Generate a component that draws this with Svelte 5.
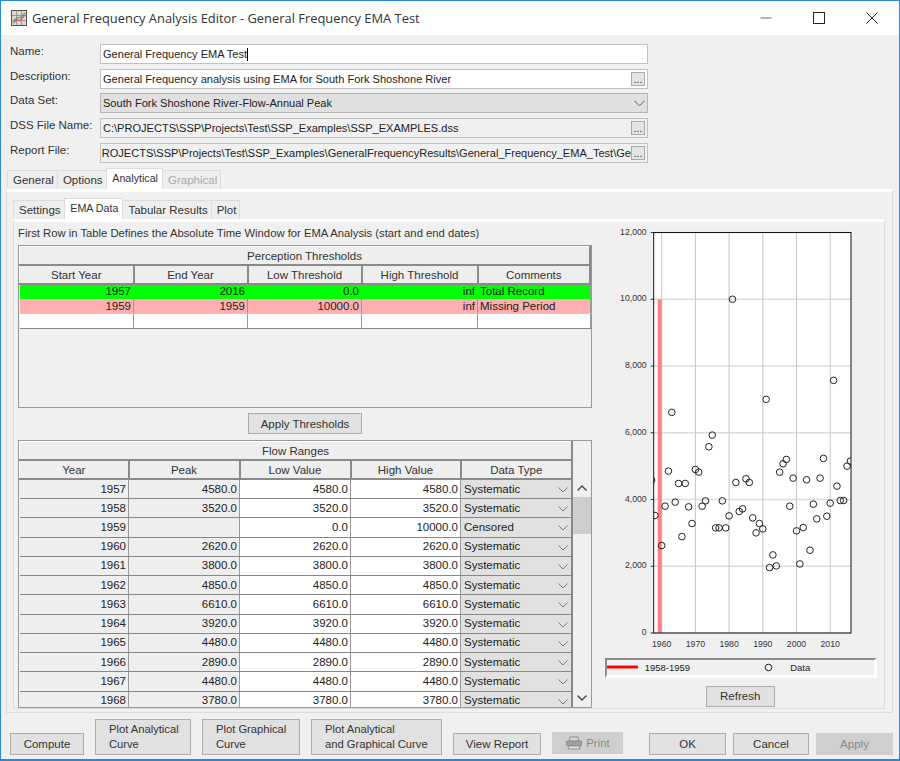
<script>
  const fields = [
    { label: 'Name:', value: 'General Frequency EMA Test', kind: 'text', caret: true },
    { label: 'Description:', value: 'General Frequency analysis using EMA for South Fork Shoshone River', kind: 'text', more: true },
    { label: 'Data Set:', value: 'South Fork Shoshone River-Flow-Annual Peak', kind: 'combo' },
    { label: 'DSS File Name:', value: 'C:\\PROJECTS\\SSP\\Projects\\Test\\SSP_Examples\\SSP_EXAMPLES.dss', kind: 'readonly', more: true },
    { label: 'Report File:', value: 'ROJECTS\\SSP\\Projects\\Test\\SSP_Examples\\GeneralFrequencyResults\\General_Frequency_EMA_Test\\Ge', kind: 'readonly', more: true, tail: true }
  ];

  const thresholds = [
    { start: '1957', end: '2016', low: '0.0', high: 'inf', comment: 'Total Record', cls: 'green' },
    { start: '1959', end: '1959', low: '10000.0', high: 'inf', comment: 'Missing Period', cls: 'pink' },
    { start: '', end: '', low: '', high: '', comment: '', cls: '' }
  ];

  const flows = [
    ['1957', '4580.0', '4580.0', '4580.0', 'Systematic'],
    ['1958', '3520.0', '3520.0', '3520.0', 'Systematic'],
    ['1959', '', '0.0', '10000.0', 'Censored'],
    ['1960', '2620.0', '2620.0', '2620.0', 'Systematic'],
    ['1961', '3800.0', '3800.0', '3800.0', 'Systematic'],
    ['1962', '4850.0', '4850.0', '4850.0', 'Systematic'],
    ['1963', '6610.0', '6610.0', '6610.0', 'Systematic'],
    ['1964', '3920.0', '3920.0', '3920.0', 'Systematic'],
    ['1965', '4480.0', '4480.0', '4480.0', 'Systematic'],
    ['1966', '2890.0', '2890.0', '2890.0', 'Systematic'],
    ['1967', '4480.0', '4480.0', '4480.0', 'Systematic'],
    ['1968', '3780.0', '3780.0', '3780.0', 'Systematic']
  ];

  // annual peaks, 1957 to 2016 (1959 has no value)
  const peaks = [
    4580, 3520, null, 2620, 3800, 4850, 6610, 3920, 4480, 2890,
    4480, 3780, 3280, 4900, 4820, 3800, 3960, 5580, 5930, 3150,
    3150, 3960, 3150, 3510, 10000, 4510, 3640, 3720, 4620, 4510,
    3450, 3000, 3280, 3120, 7000, 1960, 2340, 2010, 4820, 5070,
    5200, 3800, 4640, 3060, 2070, 3160, 4590, 2480, 3860, 3420,
    4640, 5230, 3500, 3890, 7570, 4400, 3970, 3970, 5000, 5150
  ];

  const plot = { left: 42.7, right: 240, top: 7.5, bottom: 408 };
  const xOf = (year) => 50.7 + (year - 1960) * 3.37;
  const yOf = (v) => plot.bottom - (v / 12000) * (plot.bottom - plot.top);

  const yTicks = [0, 2000, 4000, 6000, 8000, 10000, 12000];
  const xTicks = [1960, 1970, 1980, 1990, 2000, 2010];
  const points = peaks
    .map((v, i) => ({ year: 1957 + i, v }))
    .filter((p) => p.v !== null);
  const fmt = (v) => v.toLocaleString('en-US');
</script>

<div class="window">
  <div class="titlebar">
    <svg class="app-icon" width="16" height="16" viewBox="0 0 16 16">
      <rect x="0.5" y="0.5" width="15" height="15" fill="#d8d8d8" stroke="#555"/>
      <path d="M1 5.5H15M1 10.5H15M5.5 1V15M10.5 1V15" stroke="#999" stroke-width="1"/>
      <path d="M2 13L6 10L9 10.5L14 5" stroke="#e0584a" stroke-width="1.2" fill="none"/>
      <path d="M2 11L6 8L10 7L14 3" stroke="#4fae4f" stroke-width="1.2" fill="none"/>
    </svg>
    <span class="title-text">General Frequency Analysis Editor - General Frequency EMA Test</span>
    <div class="win-controls">
      <svg width="12" height="12" viewBox="0 0 12 12"><path d="M0.5 6H11.5" stroke="#666" stroke-width="1"/></svg>
      <svg width="12" height="12" viewBox="0 0 12 12"><rect x="0.5" y="0.5" width="11" height="11" fill="none" stroke="#222"/></svg>
      <svg width="12" height="12" viewBox="0 0 12 12"><path d="M0.5 0.5L11.5 11.5M11.5 0.5L0.5 11.5" stroke="#222"/></svg>
    </div>
  </div>

  <div class="body">
    <div class="form">
      {#each fields as f}
        <div class="row">
          <span class="label">{f.label}</span>
          <div class="field {f.kind}" class:tail={f.tail}>
            <span class="value">{f.value}</span>
            {#if f.caret}<i class="caret"></i>{/if}
            {#if f.more}<span class="more">...</span>{/if}
            {#if f.kind === 'combo'}
              <svg class="chev" width="11" height="7" viewBox="0 0 11 7"><path d="M0.5 0.8L5.5 5.8L10.5 0.8" fill="none" stroke="#555"/></svg>
            {/if}
          </div>
        </div>
      {/each}
    </div>

    <div class="tabs outer-tabs">
      <span class="tab">General</span>
      <span class="tab">Options</span>
      <span class="tab active">Analytical</span>
      <span class="tab disabled">Graphical</span>
    </div>

    <div class="outer-panel">
      <div class="tabs inner-tabs">
        <span class="tab">Settings</span>
        <span class="tab active">EMA Data</span>
        <span class="tab">Tabular Results</span>
        <span class="tab">Plot</span>
      </div>

      <div class="inner-panel">
        <div class="left">
          <p class="hint">First Row in Table Defines the Absolute Time Window for EMA Analysis (start and end dates)</p>

          <div class="table-box thresholds">
            <table>
              <colgroup>
                <col style="width:114px"/><col style="width:114px"/><col style="width:114px"/><col style="width:116px"/><col/>
              </colgroup>
              <thead>
                <tr><th class="group" colspan="5">Perception Thresholds</th></tr>
                <tr class="heads"><th>Start Year</th><th>End Year</th><th>Low Threshold</th><th>High Threshold</th><th>Comments</th></tr>
              </thead>
              <tbody>
                {#each thresholds as t}
                  <tr class={t.cls}>
                    <td>{t.start}</td><td>{t.end}</td><td>{t.low}</td><td>{t.high}</td><td class="txt">{t.comment}</td>
                  </tr>
                {/each}
              </tbody>
            </table>
          </div>

          <div class="apply-row"><button class="btn apply-thresholds">Apply Thresholds</button></div>

          <div class="table-box flows">
            <div class="flow-scroll">
              <table>
                <colgroup>
                  <col style="width:109px"/><col style="width:111px"/><col style="width:111px"/><col style="width:110px"/><col/>
                </colgroup>
                <thead>
                  <tr><th class="group" colspan="5">Flow Ranges</th></tr>
                  <tr class="heads"><th>Year</th><th>Peak</th><th>Low Value</th><th>High Value</th><th>Data Type</th></tr>
                </thead>
                <tbody>
                  {#each flows as r}
                    <tr>
                      <td class="locked">{r[0]}</td>
                      <td class="locked" class:blank={r[1] === ''}>{r[1]}</td>
                      <td>{r[2]}</td>
                      <td>{r[3]}</td>
                      <td class="dtype">
                        <span>{r[4]}</span>
                        <svg width="10" height="6" viewBox="0 0 10 6"><path d="M0.5 0.5L5 5L9.5 0.5" fill="none" stroke="#777"/></svg>
                      </td>
                    </tr>
                  {/each}
                </tbody>
              </table>
            </div>
            <div class="scrollbar">
              <div class="sb-head"></div>
              <div class="sb-arrow">
                <svg width="10" height="6" viewBox="0 0 10 6"><path d="M0.5 5.5L5 1L9.5 5.5" fill="none" stroke="#444" stroke-width="1.4"/></svg>
              </div>
              <div class="sb-track"><div class="sb-thumb"></div></div>
              <div class="sb-arrow">
                <svg width="10" height="6" viewBox="0 0 10 6"><path d="M0.5 0.5L5 5L9.5 0.5" fill="none" stroke="#444" stroke-width="1.4"/></svg>
              </div>
            </div>
          </div>
        </div>

        <div class="right">
          <svg class="chart" width="270" height="430" viewBox="0 0 270 430">
            <rect x={plot.left} y={plot.top} width={plot.right - plot.left} height={plot.bottom - plot.top} fill="#fff"/>
            {#each yTicks as v}
              <line x1={plot.left} x2={plot.right} y1={yOf(v)} y2={yOf(v)} stroke="#dcdcdc" stroke-width="1.3"/>
              <line x1={plot.left - 3} x2={plot.left} y1={yOf(v)} y2={yOf(v)} stroke="#333"/>
              <text x={plot.left - 7} y={yOf(v) + 2} text-anchor="end" class="tick">{fmt(v)}</text>
            {/each}
            {#each xTicks as year}
              <line x1={xOf(year)} x2={xOf(year)} y1={plot.top} y2={plot.bottom} stroke="#c4c4c4" stroke-width="1"/>
              <text x={xOf(year)} y={plot.bottom + 14} text-anchor="middle" class="tick">{year}</text>
            {/each}
            <rect x="46.7" y={yOf(10000)} width="4" height={plot.bottom - yOf(10000)} fill="#ff8080"/>
            <svg x={plot.left} y={plot.top} width={plot.right - plot.left} height={plot.bottom - plot.top} viewBox="{plot.left} {plot.top} {plot.right - plot.left} {plot.bottom - plot.top}">
              {#each points as p}
                <circle cx={xOf(p.year)} cy={yOf(p.v)} r="3.3" fill="none" stroke="#222" stroke-width="1"/>
              {/each}
            </svg>
            <rect x={plot.left} y={plot.top} width={plot.right - plot.left} height={plot.bottom - plot.top} fill="none" stroke="#111" stroke-width="1"/>
          </svg>

          <div class="legend">
            <i class="legend-line"></i>
            <span class="legend-a">1958-1959</span>
            <svg class="legend-dot" width="9" height="9" viewBox="0 0 9 9"><circle cx="4.5" cy="4.5" r="3.3" fill="none" stroke="#222"/></svg>
            <span class="legend-b">Data</span>
          </div>

          <div class="refresh-row"><button class="btn refresh">Refresh</button></div>
        </div>
      </div>
    </div>

    <div class="footer">
      <button class="btn compute">Compute</button>
      <button class="btn two plot-a">Plot Analytical<br/>Curve</button>
      <button class="btn two plot-g">Plot Graphical<br/>Curve</button>
      <button class="btn two plot-ag">Plot Analytical<br/>and Graphical Curve</button>
      <button class="btn report">View Report</button>
      <button class="btn print" disabled>
        <svg width="18" height="14" viewBox="0 0 18 14">
          <path d="M5 1H13L14 5H4Z" fill="#d6d6d6" stroke="#8f8f8f"/>
          <rect x="1.5" y="5" width="15" height="5" rx="1" fill="#a0a0a0" stroke="#8f8f8f"/>
          <path d="M4 10H14L15 13H3Z" fill="#e4e4e4" stroke="#8f8f8f"/>
        </svg>
        Print
      </button>
      <button class="btn ok">OK</button>
      <button class="btn cancel">Cancel</button>
      <button class="btn apply" disabled>Apply</button>
    </div>
  </div>
</div>

<style>
  :global(body) {
    margin: 0;
  }

  .window {
    width: 900px;
    height: 761px;
    box-sizing: border-box;
    border: 1px solid #2b88d8;
    border-bottom-width: 2px;
    background: #f0f0f0;
    font-family: "Liberation Sans", Arial, sans-serif;
    font-size: 11.5px;
    color: #222;
    display: flex;
    flex-direction: column;
    overflow: hidden;
  }

  .titlebar {
    height: 34px;
    flex: none;
    background: #fff;
    display: flex;
    align-items: center;
    padding-left: 10px;
  }

  .app-icon {
    margin-right: 5px;
  }

  .title-text {
    font-family: "Open Sans", sans-serif;
    font-size: 12.9px;
    color: #333;
  }

  .win-controls {
    margin-left: auto;
    display: flex;
    gap: 41px;
    padding-right: 21px;
    align-items: center;
  }

  .body {
    flex: 1;
    display: flex;
    flex-direction: column;
    padding: 9px 5px 0 5px;
    min-height: 0;
  }

  .form {
    display: flex;
    flex-direction: column;
    gap: 4.7px;
    padding-left: 4px;
  }

  .row {
    display: flex;
    height: 20px;
  }

  .label {
    width: 90px;
    line-height: 15px;
    color: #333;
  }

  .field {
    width: 548px;
    box-sizing: border-box;
    border: 1px solid #c0c0c0;
    display: flex;
    align-items: center;
    padding: 0 2px;
    overflow: hidden;
    position: relative;
    background: #f0f0f0;
    font-size: 11.05px;
  }

  .field.text {
    background: #fff;
  }

  .field.combo {
    background: #e0e0e0;
    border-color: #b4b4b4;
  }

  .field.tail {
    justify-content: flex-end;
    padding-right: 16px;
  }

  .value {
    white-space: nowrap;
    flex: none;
  }

  .caret {
    width: 1px;
    height: 13px;
    background: #000;
  }

  .more {
    position: absolute;
    right: 2px;
    top: 2px;
    width: 12px;
    height: 12px;
    background: #e4e4e4;
    border: 1px solid #aaa;
    font-size: 10px;
    line-height: 14px;
    text-align: center;
  }

  .chev {
    position: absolute;
    right: 2px;
    top: 6px;
  }

  .tabs {
    display: flex;
    align-items: flex-end;
    height: 20px;
    flex: none;
  }

  .outer-tabs {
    margin-top: 6px;
    padding-left: 1px;
  }

  .tab {
    height: 18px;
    line-height: 18px;
    padding: 0 3px 0 5px;
    border: 1px solid #dcdcdc;
    border-bottom: none;
    background: #eee;
    color: #333;
    margin-right: -1px;
  }

  .tab.active {
    background: #fff;
    height: 20px;
    line-height: 18px;
    padding: 0 4px 0 5.7px;
    font-size: 10.7px;
  }

  .tab.disabled {
    color: #aaa;
  }

  .outer-panel {
    height: 524px;
    width: 887px;
    box-sizing: border-box;
    border: 1px solid #dcdcdc;
    border-top: 3px solid #fff;
    padding: 7px 7px 3px 6px;
    display: flex;
    flex-direction: column;
    flex: none;
  }

  .inner-panel {
    flex: 1;
    border: 1px solid #dcdcdc;
    border-top: 3px solid #fff;
    display: flex;
    padding: 3px 4px 0 4px;
    min-height: 0;
  }

  .left {
    width: 574px;
    flex: none;
  }

  .hint {
    margin: 0;
    height: 20px;
    line-height: 17px;
    color: #333;
    font-size: 11.28px;
  }

  .table-box {
    box-sizing: border-box;
    border: 1px solid #999;
    background: #f0f0f0;
  }

  .thresholds {
    height: 163px;
  }

  table {
    width: 100%;
    border-collapse: collapse;
    table-layout: fixed;
  }

  th {
    font-weight: normal;
    background: #eee;
    color: #333;
    box-sizing: border-box;
    height: 19px;
    padding: 0;
    border-right: 2px solid #8a8a8a;
    border-bottom: 2px solid #8a8a8a;
    border-top: 1px solid #fff;
    border-left: 1px solid #fff;
    text-align: center;
  }

  td {
    box-sizing: border-box;
    text-align: right;
    padding: 0 2px;
    white-space: nowrap;
    overflow: hidden;
    border-right: 1px solid #999;
    border-bottom: 1px solid #888;
    background: #fff;
    height: 14.6px;
    line-height: 13px;
  }

  td.txt {
    text-align: left;
  }

  tr.green td {
    background: #00ff00;
    border-bottom-color: #00ff00;
    color: #111;
  }

  tr.pink td {
    background: #ffafaf;
    border-bottom-color: #ffafaf;
  }

  .apply-row {
    height: 32px;
    display: flex;
    align-items: center;
    padding-left: 230px;
  }

  .btn {
    font: inherit;
    color: #333;
    box-sizing: border-box;
    background: #e1e1e1;
    border: 1px solid #adadad;
    padding: 0;
    height: 22px;
    flex: none;
  }

  .apply-thresholds {
    width: 114px;
    height: 21px;
  }

  .flows {
    height: 268px;
    display: flex;
  }

  .flow-scroll {
    width: 554px;
    overflow: hidden;
  }

  .flows td {
    height: 19.25px;
    line-height: 17px;
  }

  .flows th.group {
    height: 19px;
  }

  .flows .heads th {
    height: 19px;
  }

  td.locked {
    background: #eee;
  }

  td.dtype {
    background: #e1e1e1;
    text-align: left;
    border: 1px solid #888;
    border-right: 2px solid #888;
    padding: 0 3px 0 3px;
    position: relative;
  }

  td.dtype svg {
    position: absolute;
    right: 3px;
    top: 7px;
  }

  .scrollbar {
    flex: 1;
    display: flex;
    flex-direction: column;
    background: #f0f0f0;
  }

  .sb-head {
    height: 38px;
  }

  .sb-arrow {
    height: 18px;
    display: flex;
    align-items: center;
    justify-content: center;
    flex: none;
  }

  .sb-track {
    flex: 1;
  }

  .sb-thumb {
    height: 37px;
    background: #cdcdcd;
  }

  .right {
    width: 270px;
    margin-left: 18.7px;
    display: flex;
    flex-direction: column;
    flex: none;
  }

  .chart {
    display: block;
    flex: none;
  }

  .tick {
    font-family: "Liberation Sans", Arial, sans-serif;
    font-size: 8.7px;
    fill: #333;
  }

  .legend {
    width: 272px;
    margin-left: -6px;
    margin-top: 3px;
    height: 20px;
    box-sizing: border-box;
    border-top: 2px solid #8c8c8c;
    border-left: 2px solid #8c8c8c;
    border-right: 3px solid #fff;
    border-bottom: 3px solid #fff;
    display: flex;
    align-items: center;
    font-size: 9.5px;
    flex: none;
  }

  .legend-line {
    width: 31px;
    height: 2px;
    background: #f00;
    border-top: 1px solid #ff8080;
    border-bottom: 1px solid #ff8080;
  }

  .legend-a {
    margin-left: 7px;
  }

  .legend-dot {
    margin-left: 74px;
  }

  .legend-b {
    margin-left: 17px;
  }

  .refresh-row {
    display: flex;
    justify-content: center;
    margin-top: 8px;
    padding-right: 11px;
  }

  .refresh {
    width: 69px;
    height: 21px;
  }

  .footer {
    display: flex;
    align-items: flex-end;
    height: 42px;
    padding-left: 4px;
    flex: none;
  }

  .footer .btn {
    margin-right: 11px;
  }

  .two {
    height: 36px;
    text-align: left;
    line-height: 15px;
    padding-left: 13px;
    font-size: 11.2px;
  }

  .compute { width: 74px; }
  .plot-a { width: 96px; }
  .plot-g { width: 98px; }
  .plot-ag { width: 131px; }
  .report { width: 88px; }

  .print {
    width: 71px;
    margin-right: 26px !important;
    margin-bottom: 1px;
    background: #cfcfcf;
    border-color: #cfcfcf;
    color: #8a8a8a;
    display: flex;
    align-items: center;
    justify-content: center;
    gap: 3px;
  }

  .ok {
    width: 77px;
    margin-right: 7px !important;
  }

  .cancel {
    width: 76px;
    margin-right: 7px !important;
  }

  .apply {
    width: 77px;
    margin-right: 0 !important;
    background: #cfcfcf;
    border-color: #cfcfcf;
    color: #8a8a8a;
  }
</style>
